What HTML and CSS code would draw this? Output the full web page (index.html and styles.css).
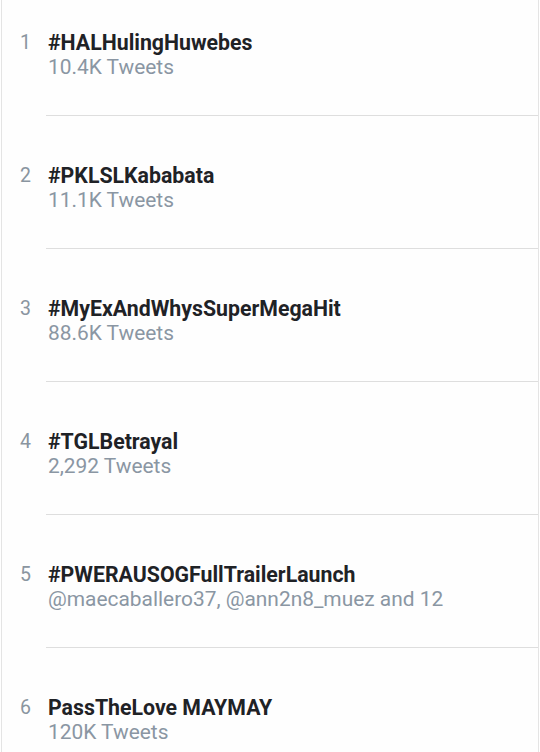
FILE: index.html
```html
<!DOCTYPE html>
<html>
<head>
<meta charset="utf-8">
<link rel="stylesheet" href="styles.css">
</head>
<body>
<div class="panel">
  <ul class="trends">
    <li class="trend">
      <span class="rank">1</span>
      <div class="info">
        <div class="title">#HALHulingHuwebes</div>
        <div class="meta">10.4K Tweets</div>
      </div>
    </li>
    <li class="trend">
      <span class="rank">2</span>
      <div class="info">
        <div class="title">#PKLSLKababata</div>
        <div class="meta">11.1K Tweets</div>
      </div>
    </li>
    <li class="trend">
      <span class="rank">3</span>
      <div class="info">
        <div class="title">#MyExAndWhysSuperMegaHit</div>
        <div class="meta">88.6K Tweets</div>
      </div>
    </li>
    <li class="trend">
      <span class="rank">4</span>
      <div class="info">
        <div class="title">#TGLBetrayal</div>
        <div class="meta">2,292 Tweets</div>
      </div>
    </li>
    <li class="trend">
      <span class="rank">5</span>
      <div class="info">
        <div class="title">#PWERAUSOGFullTrailerLaunch</div>
        <div class="meta">@maecaballero37, @ann2n8_muez and 12</div>
      </div>
    </li>
    <li class="trend">
      <span class="rank">6</span>
      <div class="info">
        <div class="title">PassTheLove MAYMAY</div>
        <div class="meta">120K Tweets</div>
      </div>
    </li>
  </ul>
</div>
</body>
</html>
```
FILE: styles.css
```css
html, body {
  margin: 0;
  padding: 0;
  background: #ffffff;
  overflow: hidden;
}
body {
  font-family: Roboto, "Liberation Sans", sans-serif;
}
.panel {
  margin-left: 1px;
  width: 536px;
  height: 752px;
  border-left: 1px solid #e4e4e4;
  border-right: 1px solid #e4e4e4;
  background: #fefefe;
  overflow: hidden;
}
.trends {
  list-style: none;
  margin: -17px 0 0 0;
  padding: 0;
}
.trend {
  display: flex;
  align-items: flex-start;
  height: 132px;
  border-bottom: 1px solid #dedede;
  margin-left: 44px;
  position: relative;
}
.rank {
  position: absolute;
  left: -26px;
  top: 49px;
  font-size: 19.5px;
  color: #8a95a0;
  line-height: 22px;
}
.info {
  padding-top: 47px;
  margin-left: 2px;
}
.title {
  font-size: 21.3px;
  font-weight: 700;
  color: #1f2226;
  line-height: 26px;
}
.meta {
  font-size: 20.9px;
  color: #8a96a3;
  line-height: 23px;
}
```
